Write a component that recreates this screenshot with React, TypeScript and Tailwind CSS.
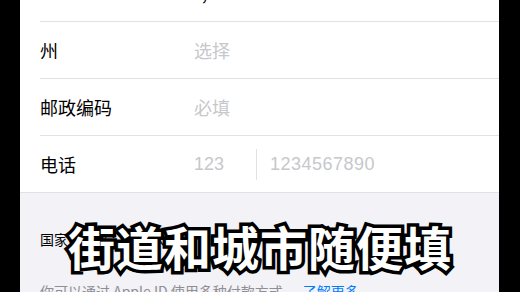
const rows = [
  { label: '州', placeholder: '选择' },
  { label: '邮政编码', placeholder: '必填' },
];

export default function App() {
  return (
    <div
      className="relative flex h-[292px] w-[520px] overflow-hidden bg-black"
      style={{ fontFamily: '"Noto Sans CJK SC", "Liberation Sans", sans-serif' }}
    >
      <div className="ml-[20px] flex h-full w-[479px] flex-col overflow-hidden bg-white">
        {/* previous row, scrolled almost out of view */}
        <div className="flex h-[21px] shrink-0 items-start overflow-hidden pl-[182px] text-[18px] leading-[20px]">
          <span className="-mt-[18px] text-black">;</span>
        </div>
        <div className="ml-[20px] h-px shrink-0 bg-[#e2e2e6]" />
        {rows.map(row => (
          <div key={row.label} className="flex flex-col">
            <div className="flex h-[56px] items-center pl-[20px] text-[18px]">
              <span className="w-[154px] text-black">{row.label}</span>
              <span className="text-[#c7c7cc]">{row.placeholder}</span>
            </div>
            <div className="ml-[20px] h-px bg-[#e2e2e6]" />
          </div>
        ))}
        <div className="flex h-[56px] shrink-0 items-center pl-[20px] text-[18px]">
          <span className="w-[154px] text-black">电话</span>
          <span className="w-[62px] font-['Liberation_Sans',sans-serif] text-[#c7c7cc]">123</span>
          <span className="h-[31px] w-px bg-[#e2e2e6]" />
          <span className="pl-[13px] font-['Liberation_Sans',sans-serif] tracking-[0.5px] text-[#c7c7cc]">1234567890</span>
        </div>
        <div className="h-px shrink-0 bg-[#e2e2e6]" />
        <div className="flex flex-1 flex-col bg-[#f2f2f7] pl-[20px] pt-[38px]">
          <div className="text-[14px] leading-[16px] text-black">国家或地区：中国大陆</div>
          <div className="mt-[36px] text-[14px] leading-[16px] text-[#8e8e93]">
            你可以通过 Apple ID 使用多种付款方式。
            <span className="ml-[6px] text-[#007aff]">了解更多</span>
          </div>
        </div>
      </div>
      <div className="absolute left-[68px] top-[216px] text-[47px] font-bold leading-[60px] tracking-[1px] text-white [-webkit-text-stroke:7px_black] [paint-order:stroke_fill]">
        街道和城市随便填
      </div>
    </div>
  );
}
